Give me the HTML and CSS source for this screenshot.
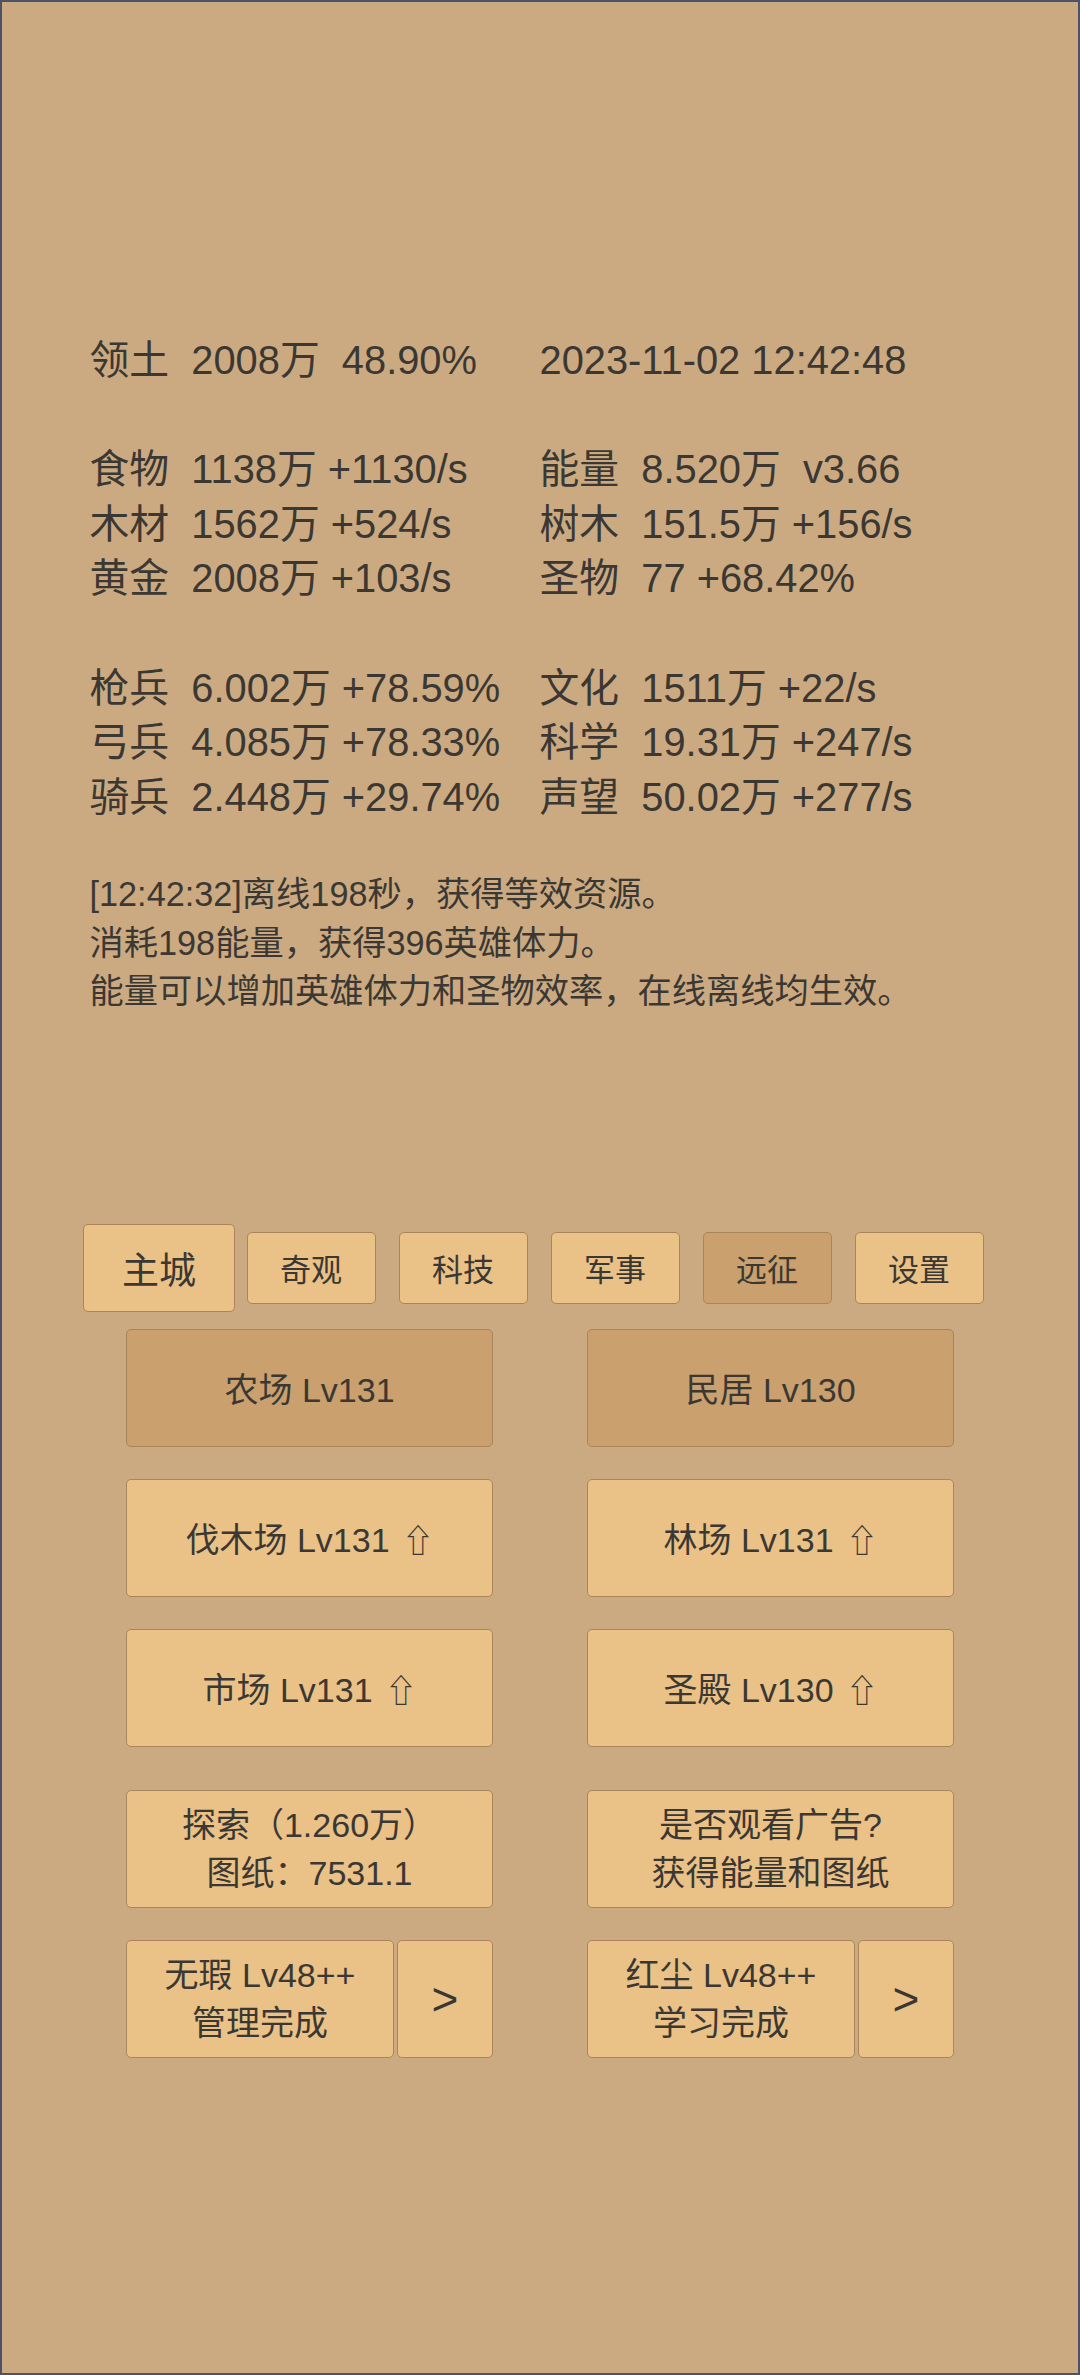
FILE: index.html
```html
<!DOCTYPE html>
<html lang="zh-CN">
<head>
<meta charset="utf-8">
<title>主城</title>
<link rel="stylesheet" href="styles.css">
</head>
<body>
<div class="screen">
  <div class="stats">
    <div class="cell">领土  2008万  48.90%</div><div class="cell">2023-11-02 12:42:48</div>
    <div class="cell"></div><div class="cell"></div>
    <div class="cell">食物  1138万 +1130/s</div><div class="cell">能量  8.520万  v3.66</div>
    <div class="cell">木材  1562万 +524/s</div><div class="cell">树木  151.5万 +156/s</div>
    <div class="cell">黄金  2008万 +103/s</div><div class="cell">圣物  77 +68.42%</div>
    <div class="cell"></div><div class="cell"></div>
    <div class="cell">枪兵  6.002万 +78.59%</div><div class="cell">文化  1511万 +22/s</div>
    <div class="cell">弓兵  4.085万 +78.33%</div><div class="cell">科学  19.31万 +247/s</div>
    <div class="cell">骑兵  2.448万 +29.74%</div><div class="cell">声望  50.02万 +277/s</div>
  </div>

  <div class="log">
    <div>[12:42:32]离线198秒，获得等效资源。</div>
    <div>消耗198能量，获得396英雄体力。</div>
    <div>能量可以增加英雄体力和圣物效率，在线离线均生效。</div>
  </div>

  <div class="tabs">
    <div class="slot"><div class="tab tab-main">主城</div></div>
    <div class="slot"><div class="tab">奇观</div></div>
    <div class="slot"><div class="tab">科技</div></div>
    <div class="slot"><div class="tab">军事</div></div>
    <div class="slot"><div class="tab tab-dim">远征</div></div>
    <div class="slot"><div class="tab">设置</div></div>
  </div>

  <div class="buildings">
    <div class="row">
      <div class="btn btn-dim">农场 Lv131</div>
      <div class="btn btn-dim">民居 Lv130</div>
    </div>
    <div class="row">
      <div class="btn">伐木场 Lv131 <span class="up">⇧</span></div>
      <div class="btn">林场 Lv131 <span class="up">⇧</span></div>
    </div>
    <div class="row">
      <div class="btn">市场 Lv131 <span class="up">⇧</span></div>
      <div class="btn">圣殿 Lv130 <span class="up">⇧</span></div>
    </div>
    <div class="row row-gap">
      <div class="btn btn-two"><span>探索（1.260万）</span><span>图纸：7531.1</span></div>
      <div class="btn btn-two"><span>是否观看广告?</span><span>获得能量和图纸</span></div>
    </div>
    <div class="row">
      <div class="pair">
        <div class="btn btn-two btn-hero"><span>无瑕 Lv48++</span><span>管理完成</span></div>
        <div class="btn btn-arrow">&gt;</div>
      </div>
      <div class="pair">
        <div class="btn btn-two btn-hero"><span>红尘 Lv48++</span><span>学习完成</span></div>
        <div class="btn btn-arrow">&gt;</div>
      </div>
    </div>
  </div>
</div>
</body>
</html>
```

FILE: styles.css
```css
html, body {
  margin: 0;
  padding: 0;
}

body {
  font-family: "Liberation Sans", "Noto Sans CJK SC", sans-serif;
  color: #3b3833;
  background: #cbaa82;
}

.screen {
  box-sizing: border-box;
  width: 1080px;
  height: 2375px;
  border: 2px solid #4d5267;
  background: #cbaa82;
  padding: 331px 0 0 0;
}

.stats {
  display: grid;
  grid-template-columns: 450px 1fr;
  grid-auto-rows: 54.6px;
  padding-left: 87.5px;
  font-size: 39.85px;
  line-height: 54.6px;
}

.cell {
  white-space: pre;
}

.log {
  margin-top: 46px;
  padding-left: 87.5px;
  font-size: 34.25px;
  line-height: 48.5px;
}

.tabs {
  display: flex;
  align-items: center;
  margin-top: 208.5px;
  padding-left: 81px;
  height: 87px;
}

.slot {
  width: 152px;
  display: flex;
  justify-content: center;
}

.tab {
  box-sizing: border-box;
  width: 129px;
  height: 72px;
  background: #eac187;
  border: 1.5px solid #a9855a;
  border-radius: 5px;
  display: flex;
  align-items: center;
  justify-content: center;
  font-size: 31px;
}

.tab-main {
  width: 155px;
  height: 88px;
  font-size: 37px;
}

.tab-dim {
  background: #c9a06e;
}

.buildings {
  margin-top: 17.5px;
  padding-left: 124px;
  display: flex;
  flex-direction: column;
  gap: 32px;
}

.row {
  display: flex;
  gap: 94px;
}

.row-gap {
  margin-top: 11px;
}

.btn {
  box-sizing: border-box;
  width: 367px;
  height: 118px;
  background: #eac187;
  border: 1.5px solid #a9855a;
  border-radius: 5px;
  display: flex;
  align-items: center;
  justify-content: center;
  font-size: 34px;
}

.btn-dim {
  background: #c9a06e;
}

.up {
  font-family: "DejaVu Sans", sans-serif;
  font-size: 32px;
  margin-left: 12px;
  font-weight: 200;
}

.btn-two {
  flex-direction: column;
  line-height: 48px;
}

.pair {
  display: flex;
  gap: 3px;
  width: 367px;
}

.btn-hero {
  width: 268px;
}

.btn-arrow {
  width: 96px;
  font-size: 46px;
}
```
